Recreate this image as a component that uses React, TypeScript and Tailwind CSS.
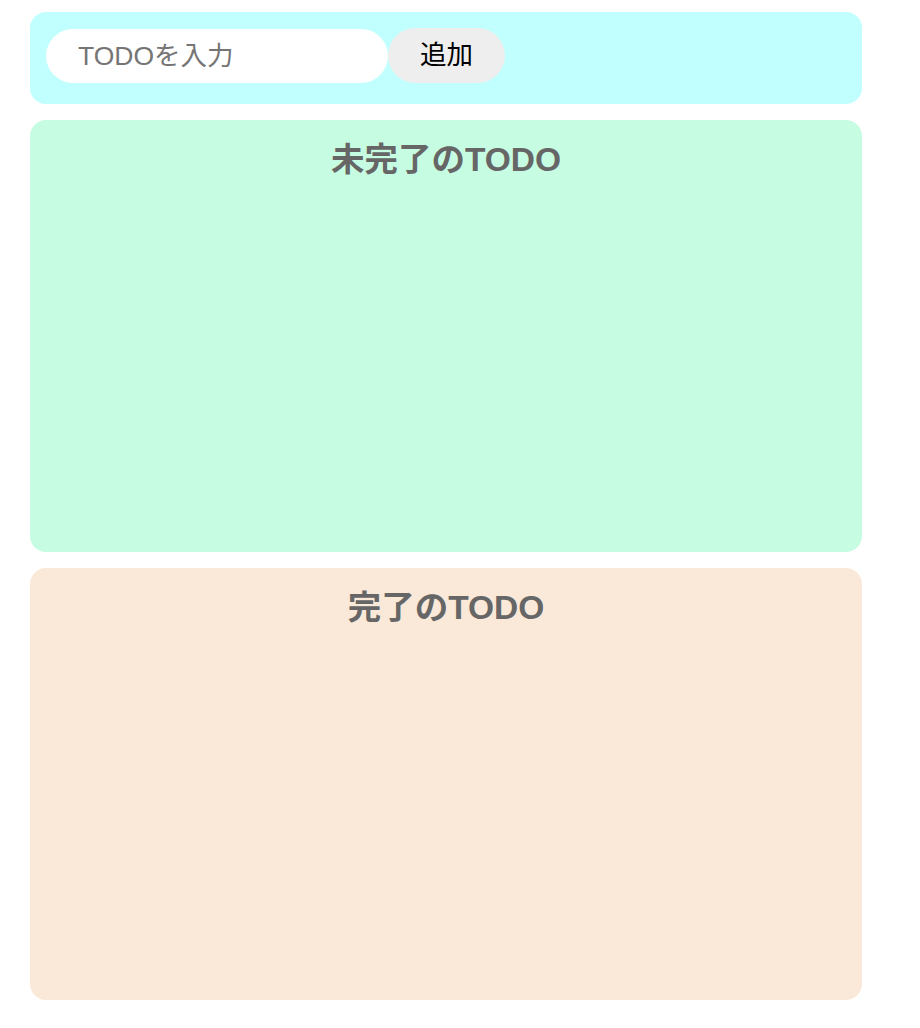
const font = { fontFamily: '"Liberation Sans", "Noto Sans CJK JP", sans-serif' }

function TodoArea({ title, bg }: { title: string; bg: string }) {
  return (
    <div className={`h-[432px] rounded-2xl px-4 pt-[20px] ${bg}`}>
      <p className="text-center text-[33.5px] font-bold leading-[39px] text-[#666666]">{title}</p>
      <ul></ul>
    </div>
  )
}

export default function App() {
  return (
    <div className="min-h-[1028px] bg-white pt-3 pl-[30px]" style={font}>
      <div className="flex w-[832px] flex-col gap-4">
        <div className="flex h-[92px] items-start rounded-2xl bg-[#c1ffff] p-4">
          <input
            placeholder="TODOを入力"
            className="mt-px h-[54px] w-[342px] rounded-full bg-white px-8 text-[26.5px] text-black outline-none placeholder:text-[#757575]"
          />
          <button className="h-[55px] rounded-full bg-[#eeeeee] px-8 text-[26.5px] text-black">追加</button>
        </div>
        <TodoArea title="未完了のTODO" bg="bg-[#c6fce2]" />
        <TodoArea title="完了のTODO" bg="bg-[#fae9d9]" />
      </div>
    </div>
  )
}
